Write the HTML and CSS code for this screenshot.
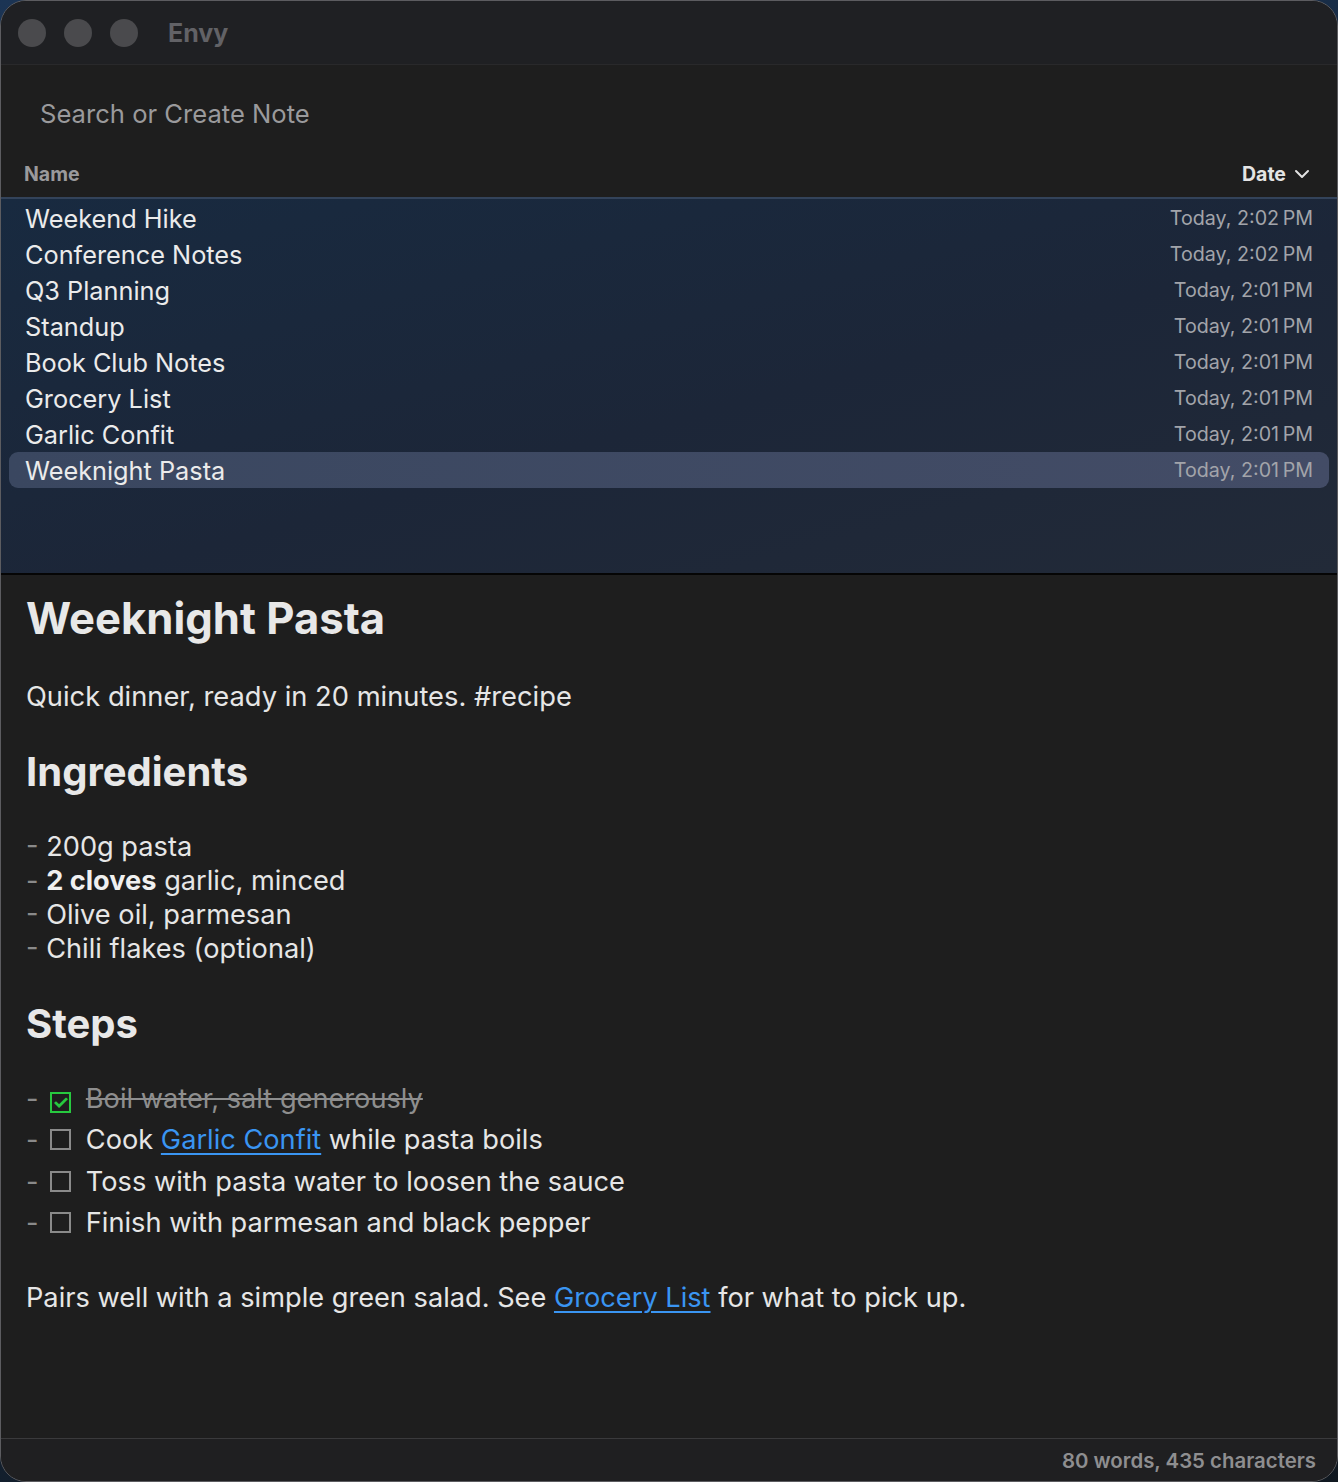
FILE: index.html
```html
<!DOCTYPE html>
<html>

<head>
    <meta charset="utf-8">
    <title>Envy</title>
    <link rel="stylesheet" href="styles.css">
</head>

<body>
    <div class="window">
        <div class="titlebar">
            <span class="light"></span>
            <span class="light"></span>
            <span class="light"></span>
            <span class="app-name">Envy</span>
        </div>

        <div class="search">Search or Create Note</div>

        <div class="list-head">
            <span class="col-name">Name</span>
            <span class="col-date">Date
                <svg width="16" height="10" viewBox="0 0 16 10"><path d="M2 2 L8 8 L14 2" fill="none" stroke="#e2e2e2" stroke-width="2" stroke-linecap="round" stroke-linejoin="round"/></svg>
            </span>
        </div>

        <div class="notes">
            <div class="note"><span>Weekend Hike</span><span class="date">Today, 2:02&#8239;PM</span></div>
            <div class="note"><span>Conference Notes</span><span class="date">Today, 2:02&#8239;PM</span></div>
            <div class="note"><span>Q3 Planning</span><span class="date">Today, 2:01&#8239;PM</span></div>
            <div class="note"><span>Standup</span><span class="date">Today, 2:01&#8239;PM</span></div>
            <div class="note"><span>Book Club Notes</span><span class="date">Today, 2:01&#8239;PM</span></div>
            <div class="note"><span>Grocery List</span><span class="date">Today, 2:01&#8239;PM</span></div>
            <div class="note"><span>Garlic Confit</span><span class="date">Today, 2:01&#8239;PM</span></div>
            <div class="note selected"><span>Weeknight Pasta</span><span class="date">Today, 2:01&#8239;PM</span></div>
        </div>

        <div class="editor">
            <h1>Weeknight Pasta</h1>
            <p class="intro">Quick dinner, ready in 20 minutes. #recipe</p>

            <h2>Ingredients</h2>
            <ul class="ingredients">
                <li><span class="dash">-</span> 200g pasta</li>
                <li><span class="dash">-</span> <b>2 cloves</b> garlic, minced</li>
                <li><span class="dash">-</span> Olive oil, parmesan</li>
                <li><span class="dash">-</span> Chili flakes (optional)</li>
            </ul>

            <h2 class="steps-title">Steps</h2>
            <ul class="steps">
                <li class="done"><span class="dash">-</span> <span class="box checked">&#10003;</span> <s>Boil water, salt generously</s></li>
                <li><span class="dash">-</span> <span class="box"></span> Cook <a href="#">Garlic Confit</a> while pasta boils</li>
                <li><span class="dash">-</span> <span class="box"></span> Toss with pasta water to loosen the sauce</li>
                <li><span class="dash">-</span> <span class="box"></span> Finish with parmesan and black pepper</li>
            </ul>

            <p class="outro">Pairs well with a simple green salad. See <a href="#">Grocery List</a> for what to pick up.</p>
        </div>

        <div class="footer">80 words, 435 characters</div>
    </div>
</body>

</html>
```

FILE: styles.css
```css
html, body {
    margin: 0;
    height: 100%;
}

body {
    background: linear-gradient(160deg, #1b3454, #101820);
    font-family: Inter, "Noto Sans", sans-serif;
    color: #e6e6e6;
}

.window {
    height: 100%;
    box-sizing: border-box;
    display: flex;
    flex-direction: column;
    border: 1px solid #5c5c60;
    border-radius: 26px;
    overflow: hidden;
    background-color: #1e1e1e;
}

.titlebar {
    height: 63px;
    flex: none;
    display: flex;
    align-items: center;
    padding-left: 17px;
    background-color: #1f2023;
    border-bottom: 1px solid #29292b;
}

.light {
    width: 28px;
    height: 28px;
    border-radius: 50%;
    background-color: #4a4a4d;
    margin-right: 18px;
}

.app-name {
    margin-left: 12px;
    font-size: 25px;
    font-weight: 700;
    color: #626266;
}

.search {
    height: 86px;
    flex: none;
    box-sizing: border-box;
    display: flex;
    align-items: center;
    padding: 10px 0 0 39px;
    font-size: 25.6px;
    color: #9a9a9c;
}

.list-head {
    height: 48px;
    flex: none;
    box-sizing: border-box;
    display: flex;
    align-items: center;
    justify-content: space-between;
    padding: 0 27px 0 23px;
    font-size: 19.5px;
    font-weight: 700;
    border-bottom: 2px solid #33435a;
}

.col-name {
    color: #9a9a9c;
}

.col-date {
    color: #e4e4e4;
    display: flex;
    align-items: center;
    gap: 8px;
}

.notes {
    height: 376px;
    flex: none;
    box-sizing: border-box;
    padding: 1px 8px 0 8px;
    background: linear-gradient(165deg, #182a40 0%, #1c2638 55%, #222a38 100%);
    border-bottom: 2px solid #050505;
}

.note {
    height: 36px;
    display: flex;
    align-items: center;
    justify-content: space-between;
    padding: 0 16px 0 16px;
    font-size: 25.3px;
    color: #ebebeb;
    border-radius: 9px;
}

.note .date {
    font-size: 19.7px;
    color: #a2a4aa;
}

.note.selected {
    background: linear-gradient(90deg, #3a4760, #434c66);
}

.editor {
    flex: 1;
    padding: 0 25px;
}

h1 {
    margin: 16px 0 0 0;
    font-size: 43.6px;
    line-height: 56px;
    font-weight: 700;
    color: #e8e8e8;
}

h2 {
    margin: 32px 0 0 0;
    font-size: 40px;
    line-height: 50px;
    font-weight: 700;
    color: #e8e8e8;
}

.intro {
    margin: 32px 0 0 0;
    font-size: 27.3px;
    line-height: 36px;
}

ul {
    list-style: none;
    margin: 0;
    padding: 0;
}

.ingredients {
    margin-top: 33px;
    font-size: 27.2px;
    line-height: 34px;
}

.ingredients b {
    font-weight: 700;
    color: #f0f0f0;
}

.dash {
    color: #8a8a8a;
}

.steps-title {
    margin-top: 33px;
}

.steps {
    margin-top: 29px;
    font-size: 27.2px;
    line-height: 41.3px;
}

.box {
    display: inline-block;
    box-sizing: border-box;
    width: 21px;
    height: 21px;
    border: 2px solid #8a8a8a;
    vertical-align: -1px;
    margin: 0 7px 0 4px;
    font-size: 19px;
    line-height: 17px;
    text-align: center;
}

.box.checked {
    border-color: #27c93f;
    color: #27c93f;
    font-weight: 700;
}

.done s {
    color: #8e8e8e;
}

a {
    color: #3a95f2;
    text-decoration: underline;
    text-underline-offset: 4px;
    text-decoration-thickness: 2px;
}

.outro {
    margin: 37px 0 0 0;
    font-size: 27.2px;
    line-height: 36px;
}

.footer {
    height: 42px;
    flex: none;
    display: flex;
    align-items: center;
    justify-content: flex-end;
    padding-right: 21px;
    border-top: 1px solid #3a3a3c;
    font-size: 20.4px;
    font-weight: 600;
    color: #8e8e90;
    background-color: #1f1f21;
}
```
